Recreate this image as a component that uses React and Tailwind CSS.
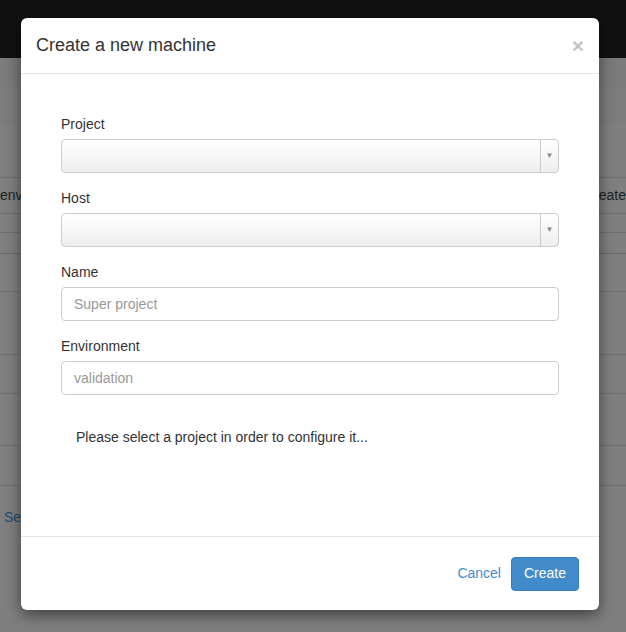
export default function App() {
  const font = { fontFamily: '"Liberation Sans", Arial, sans-serif' };
  const Select = () => (
    <div className="flex h-[34px] rounded border border-[#cccccc] bg-gradient-to-b from-white to-[#eeeeee]">
      <div className="flex-1" />
      <div className="flex w-[18px] items-center justify-center border-l border-[#cccccc] text-[8px] text-[#888]">▼</div>
    </div>
  );
  const Input = ({ ph }) => (
    <input
      placeholder={ph}
      className="h-[34px] w-full rounded border border-[#cccccc] px-3 text-[14px] text-[#555] placeholder:text-[#999] outline-none"
      style={font}
    />
  );
  const Field = ({ label, children }) => (
    <div>
      <label className="mb-[5px] block leading-5">{label}</label>
      {children}
    </div>
  );
  return (
    <div className="relative h-[632px] w-[626px] overflow-hidden bg-[#7f7f7f]" style={font}>
      {/* page behind the backdrop */}
      <div className="h-[58px] bg-[#111111]" />
      <div className="h-[29px] bg-[#7b7b7b]" />
      <div className="h-[36px] bg-[#7d7d7d]" />
      <div className="h-[55px] border-b border-[#6f6f6f]" />
      <div className="flex h-[36px] items-center justify-between border-b border-[#6f6f6f] text-[14px] text-[#222]">
        <span>envi</span>
        <span>reate</span>
      </div>
      <div className="h-[19px] border-b border-[#707070]" />
      <div className="h-[21px] border-b border-[#6a6a6a]" />
      <div className="h-[38px] border-b border-[#707070]" />
      <div className="h-[63px] border-b border-[#707070]" />
      <div className="h-[39px] border-b border-[#707070]" />
      <div className="h-[52px] border-b border-[#707070]" />
      <div className="h-[40px] border-b border-[#707070]" />
      <div className="pl-1 pt-[21px] text-[14px] text-[#1e4a73]">Se</div>

      {/* modal */}
      <div className="absolute left-[21px] top-[18px] flex h-[592px] w-[578px] flex-col rounded-md bg-white shadow-[0_5px_15px_rgba(0,0,0,0.5)]">
        <div className="flex h-[56px] items-center justify-between border-b border-[#e5e5e5] px-[15px]">
          <h4 className="text-[18px] text-[#333]">Create a new machine</h4>
          <span className="text-[21px] font-bold leading-none text-[#c4c4c4]">×</span>
        </div>
        <div className="flex-1 px-[40px] pt-[40px] text-[14px] text-[#333]">
          <div className="flex flex-col gap-[15px]">
            <Field label="Project"><Select /></Field>
            <Field label="Host"><Select /></Field>
            <Field label="Name"><Input ph="Super project" /></Field>
            <Field label="Environment"><Input ph="validation" /></Field>
          </div>
          <p className="mt-[32px] pl-[15px] leading-5">Please select a project in order to configure it...</p>
        </div>
        <div className="flex h-[74px] items-center justify-end gap-[10px] border-t border-[#e5e5e5] px-[20px]">
          <span className="text-[14px] text-[#428bca]">Cancel</span>
          <button className="h-[34px] rounded border border-[#357ebd] bg-[#428bca] px-3 text-[14px] text-white">Create</button>
        </div>
      </div>
    </div>
  );
}
